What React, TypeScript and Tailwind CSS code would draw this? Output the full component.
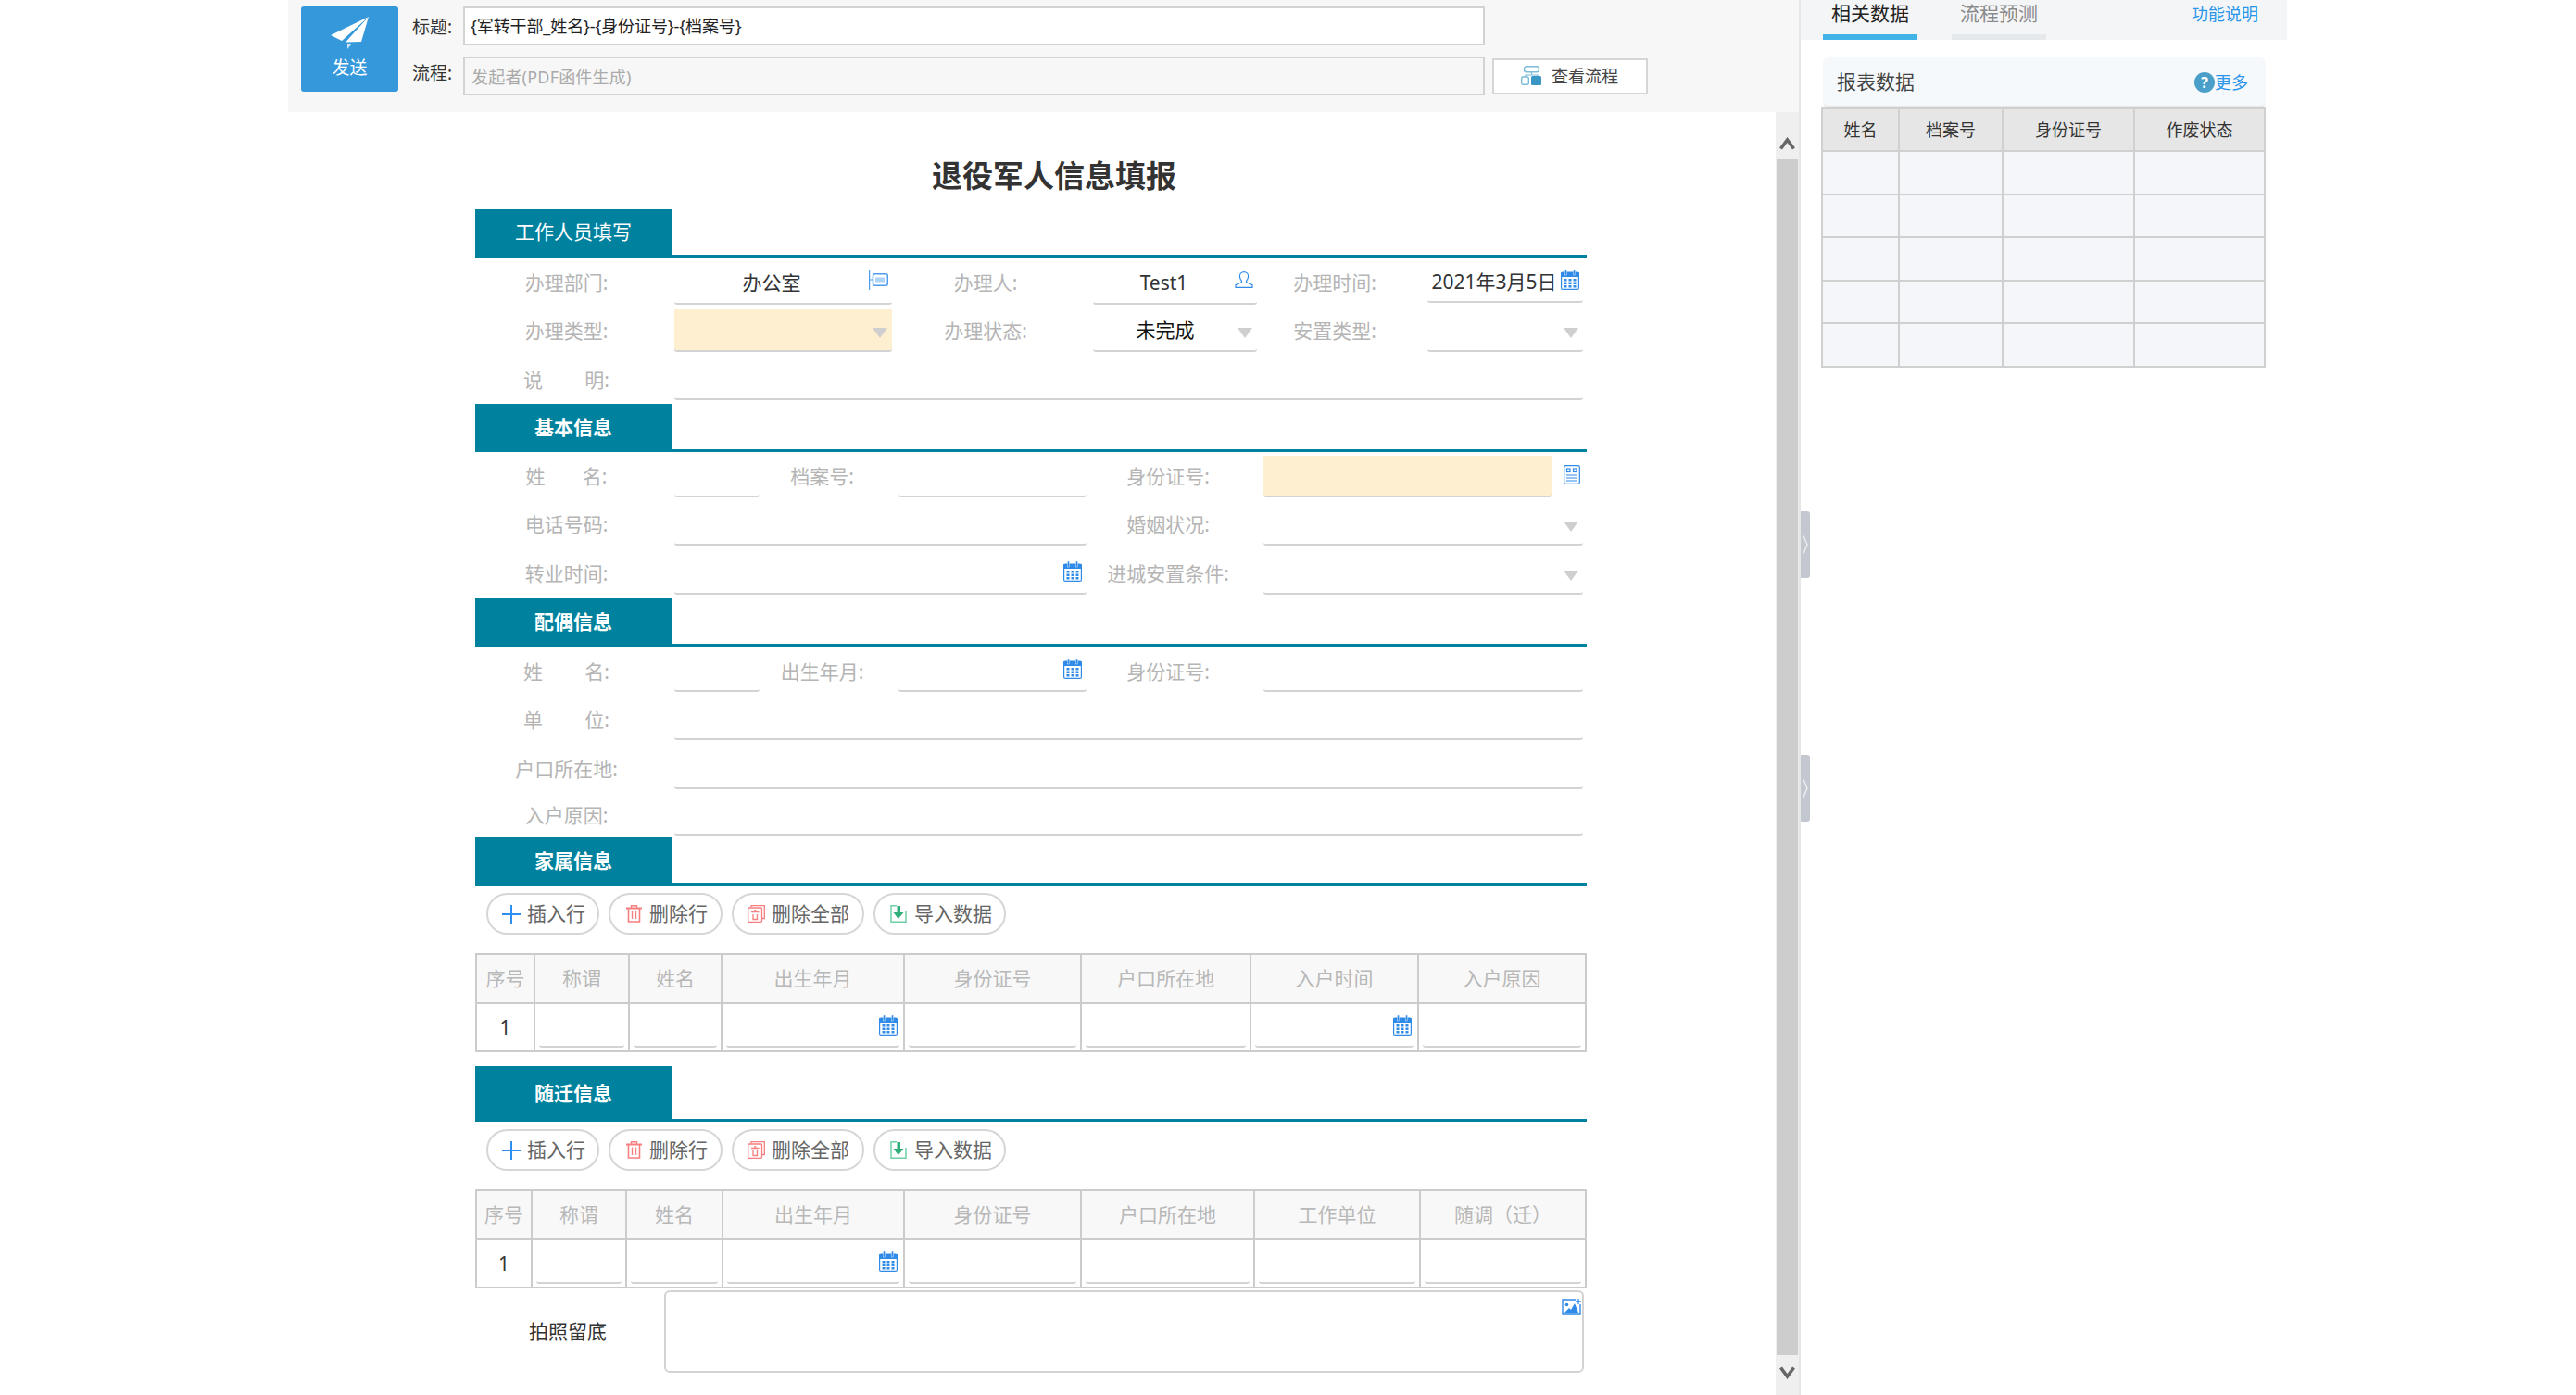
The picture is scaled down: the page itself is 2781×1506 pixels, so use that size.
import React from "react";

const BLUE = "#2f8ae8";

function Calendar() {
  return (
    <svg width="20" height="22" viewBox="0 0 20 22" className="block shrink-0">
      <rect x="0.6" y="3" width="18.8" height="18.4" rx="1.5" fill="#fff" stroke={BLUE} strokeWidth="1.2" />
      <rect x="0" y="3" width="20" height="5" rx="1" fill={BLUE} />
      <rect x="4.5" y="0" width="2" height="6" fill={BLUE} stroke="#fff" strokeWidth="0.4" />
      <rect x="13.5" y="0" width="2" height="6" fill={BLUE} stroke="#fff" strokeWidth="0.4" />
      {[3.5, 8.5, 13.5].map((x) =>
        [10, 13.5, 17].map((y) => <rect key={`${x}-${y}`} x={x} y={y} width="3" height="2.5" fill={BLUE} />)
      )}
    </svg>
  );
}

function Caret() {
  return (
    <svg width="16" height="11" viewBox="0 0 16 11" className="block shrink-0">
      <path d="M0 0H16L8 11Z" fill="#cfcfcf" />
    </svg>
  );
}

function DeptIcon() {
  return (
    <svg width="21" height="22" viewBox="0 0 21 22" className="block shrink-0" fill="none" stroke="#4a9df0">
      <path d="M0.6 0V22M0.6 11H4" strokeWidth="1.2" />
      <rect x="4.5" y="4.8" width="15.8" height="12.4" rx="2" strokeWidth="1.5" />
      <path d="M8 8.5V13.5M10 8.5V13.5M12 8.5V13.5M14 8.5V13.5M16 8.5V13.5" strokeWidth="0.9" />
    </svg>
  );
}

function PersonIcon() {
  return (
    <svg width="20" height="18" viewBox="0 0 20 18" className="block shrink-0" fill="none" stroke={BLUE} strokeWidth="1.2">
      <path d="M10 0.7a4.6 4.6 0 0 0-4.6 4.6c0 2 .9 3.6 2 4.8v1.6L1 14.6v2.7h18v-2.7l-6.4-2.9v-1.6c1.1-1.2 2-2.8 2-4.8A4.6 4.6 0 0 0 10 .7z" />
    </svg>
  );
}

function IdIcon() {
  return (
    <svg width="18" height="21" viewBox="0 0 18 21" className="block shrink-0" fill="none" stroke={BLUE} strokeWidth="1.2">
      <rect x="0.7" y="0.7" width="16.6" height="19.6" rx="1.5" />
      <rect x="3.5" y="4" width="3.5" height="3.5" />
      <rect x="10.5" y="4" width="3.5" height="3.5" />
      <path d="M3 11H15M3 14H15M3 17H15" />
    </svg>
  );
}

function ImageAddIcon() {
  return (
    <svg width="21" height="18" viewBox="0 0 21 18" className="block">
      <path d="M15 1H1V17H20V6" fill="none" stroke={BLUE} strokeWidth="1.4" />
      <circle cx="5.5" cy="6.5" r="1.8" fill={BLUE} />
      <path d="M3 15L8 10L10 12L14 5L18 15Z" fill={BLUE} />
      <path d="M18 0V6M15 3H21" stroke={BLUE} strokeWidth="1.3" />
    </svg>
  );
}

function PlusIcon() {
  return (
    <svg width="20" height="20" viewBox="0 0 20 20" className="block shrink-0">
      <path d="M10 0V20M0 10H20" stroke="#2f8ff0" strokeWidth="2" />
    </svg>
  );
}

function TrashIcon() {
  return (
    <svg width="17" height="19" viewBox="0 0 17 19" className="block shrink-0" fill="none" stroke="#f77f7f">
      <path d="M0 3.5H17" strokeWidth="2" />
      <path d="M5.5 3V0.8H11.5V3" strokeWidth="1.4" />
      <path d="M2.5 4V18H14.5V4" strokeWidth="1.6" />
      <path d="M6.5 6.5V15M10.5 6.5V15" strokeWidth="1.4" />
    </svg>
  );
}

function Trash2Icon() {
  return (
    <svg width="19" height="19" viewBox="0 0 19 19" className="block shrink-0" fill="none" stroke="#f77f7f" strokeWidth="1.3">
      <path d="M4 2.5V0.7H18.3V14.5H16" />
      <rect x="0.7" y="3" width="14.8" height="15.3" rx="1" />
      <path d="M4 7.5H12.5M6 10V15.5H10.5V10M7 5.8H9.5" />
    </svg>
  );
}

function ImportIcon() {
  return (
    <svg width="18" height="19" viewBox="0 0 18 19" className="block shrink-0" fill="none">
      <path d="M7 0.8H1V18.2H17V7" stroke="#6fcfa5" strokeWidth="1.5" />
      <path d="M11 1V8H14.5L8.8 15L3.5 8H7.5V1Z" fill="#2fae78" />
    </svg>
  );
}

function FlowIcon() {
  return (
    <svg width="23" height="21" viewBox="0 0 23 21" className="block shrink-0" fill="none">
      <rect x="3.5" y="0.7" width="16" height="6" rx="2.5" stroke="#7cbcd8" strokeWidth="1.4" />
      <path d="M11.5 7V10M5 12V10H18V12" stroke="#7cbcd8" strokeWidth="1.2" />
      <rect x="0.7" y="12" width="7.6" height="8.3" rx="1.5" stroke="#7cbcd8" strokeWidth="1.4" />
      <rect x="11" y="11" width="11" height="10" rx="1.5" fill="#3a97c5" />
    </svg>
  );
}

function PlaneIcon() {
  return (
    <svg width="41" height="35" viewBox="0 0 41 35" className="block">
      <path d="M41 0L0 20L12 26Z" fill="#fff" />
      <path d="M41 0L16 27.5L33 27Z" fill="#fff" />
      <path d="M18 29V35L23 29Z" fill="#fff" fillOpacity="0.75" />
    </svg>
  );
}

function Section({ title, bold = true, tall = false, className = "" }: { title: string; bold?: boolean; tall?: boolean; className?: string }) {
  return (
    <div className={`flex border-b-[3px] border-[#00829e] ${tall ? "h-[60px]" : "h-[52px]"} ${className}`}>
      <div className={`flex h-full w-[212px] items-center justify-center bg-[#00829e] text-[21px] leading-none text-white ${bold ? "pt-[2px] font-bold" : ""}`}>
        {title}
      </div>
    </div>
  );
}

function Label({ className, children }: { className: string; children: React.ReactNode }) {
  return <div className={`flex shrink-0 items-center justify-center text-[21px] leading-none whitespace-nowrap text-[#b5b5b5] ${className}`}>{children}</div>;
}

function Spread({ a, b, className }: { a: string; b: string; className: string }) {
  return (
    <span className={`flex justify-between ${className}`}>
      <span>{a}</span>
      <span>{b}</span>
    </span>
  );
}

function Field({ className, children }: { className: string; children?: React.ReactNode }) {
  return <div className={`flex shrink-0 items-center rounded-b-[3px] border-b-2 border-[#d3d3d3] text-[21px] leading-none text-[#333] ${className}`}>{children}</div>;
}

const L1 = "w-[215px] pr-[18px]";
const H1 = "h-[46px]";
const H2 = "h-[45px]";

function ActionButtons({ className }: { className: string }) {
  const cls = "flex h-[45px] items-center rounded-full border-2 border-[#d6d6d6] bg-white text-[21px] leading-none whitespace-nowrap text-[#666]";
  return (
    <div className={`flex gap-[10px] pl-[12px] ${className}`}>
      <div className={`${cls} w-[122px] gap-[7px] pl-[15px]`}><PlusIcon />插入行</div>
      <div className={`${cls} w-[123px] gap-[8px] pl-[17px]`}><TrashIcon />删除行</div>
      <div className={`${cls} w-[143px] gap-[7px] pl-[15px]`}><Trash2Icon />删除全部</div>
      <div className={`${cls} w-[143px] gap-[8px] pl-[16px]`}><ImportIcon />导入数据</div>
    </div>
  );
}

function CellInput({ calendar = false }: { calendar?: boolean }) {
  return (
    <div className="mx-[4px] mb-[3px] flex h-[47px] items-center justify-end rounded-b-[3px] border-b-2 border-[#d3d3d3] pr-[2px]">
      {calendar && <Calendar />}
    </div>
  );
}

function DataTable({ cols, heads, cal }: { cols: string[]; heads: string[]; cal: number[] }) {
  const border = "border-2 border-[#cccccc]";
  return (
    <table className="w-[1198px] table-fixed border-collapse">
      <colgroup>
        {cols.map((c, i) => (
          <col key={i} className={c} />
        ))}
      </colgroup>
      <tbody>
        <tr className="h-[53px]">
          {heads.map((h, i) => (
            <td key={i} className={`${border} bg-[#f8f8f8] p-0 text-center text-[21px] leading-none whitespace-nowrap text-[#b8b8b8]`}>
              {h}
            </td>
          ))}
        </tr>
        <tr className="h-[52px]">
          <td className={`${border} p-0 text-center text-[21px] leading-none text-[#333]`}>1</td>
          {heads.slice(1).map((_, i) => (
            <td key={i} className={`${border} p-0 align-bottom`}>
              <CellInput calendar={cal.includes(i + 1)} />
            </td>
          ))}
        </tr>
      </tbody>
    </table>
  );
}

function Scrollbar() {
  return (
    <div className="flex w-[25px] shrink-0 flex-col bg-[#efefef]">
      <div className="flex h-[51px] justify-center pt-[27px]">
        <svg width="17" height="14" viewBox="0 0 17 14" className="block">
          <path d="M1.5 12.5L8.5 3L15.5 12.5" fill="none" stroke="#666" strokeWidth="3.6" />
        </svg>
      </div>
      <div className="mx-px flex-1 bg-[#cdcdcd]" />
      <div className="flex h-[43px] justify-center pt-[12px]">
        <svg width="17" height="14" viewBox="0 0 17 14" className="block">
          <path d="M1.5 1.5L8.5 11L15.5 1.5" fill="none" stroke="#666" strokeWidth="3.6" />
        </svg>
      </div>
    </div>
  );
}

function Handle({ className }: { className: string }) {
  return (
    <div className={`absolute left-0 flex h-[72px] w-[10px] items-center justify-center rounded-r-[3px] bg-[#c3c8d0] ${className}`}>
      <svg width="6" height="20" viewBox="0 0 6 20" className="block">
        <path d="M1 0.5L5 10L1 19.5" fill="none" stroke="#eceef1" strokeWidth="1.4" />
      </svg>
    </div>
  );
}

function TopBar() {
  return (
    <div className="flex h-[121px] shrink-0 bg-[#f7f7f7] pt-[7px] pl-[14px]">
      <div className="flex h-[92px] w-[105px] shrink-0 flex-col items-center rounded-[3px] bg-[#3498db] pt-[11px] text-white">
        <PlaneIcon />
        <span className="mt-[11px] text-[19px] leading-none">发送</span>
      </div>
      <div className="ml-[15px] flex flex-col gap-[12px]">
        <div className="flex h-[42px]">
          <div className="flex w-[55px] items-center pt-[3px] text-[19px] leading-none text-[#333]">标题:</div>
          <div className="flex w-[1103px] items-center border-2 border-[#d3d3d3] bg-white pl-[6px] text-[18px] leading-none tracking-[-0.1px] text-[#222]">
            {"{军转干部_姓名}-{身份证号}-{档案号}"}
          </div>
        </div>
        <div className="flex h-[42px]">
          <div className="flex w-[55px] items-center pb-[5px] text-[19px] leading-none text-[#333]">流程:</div>
          <div className="flex w-[1103px] items-center border-2 border-[#d3d3d3] bg-[#f7f7f7] pt-[2px] pl-[7px] text-[18px] leading-none tracking-[0.2px] text-[#aaa]">
            发起者(PDF函件生成)
          </div>
          <div className="mt-[2px] ml-[8px] flex h-[39px] w-[168px] items-center gap-[10px] border-2 border-[#d6d6d6] bg-white pb-[2px] pl-[29px] text-[18px] leading-none text-[#444]">
            <FlowIcon />
            查看流程
          </div>
        </div>
      </div>
    </div>
  );
}

function Form() {
  return (
    <div className="min-w-0 flex-1 pl-[202px]">
      <div className="w-[1200px]">
        <h1 className="h-[105px] pt-[50px] pl-[50px] text-center text-[33px] leading-[38px] font-bold text-[#333]">退役军人信息填报</h1>

        <Section title="工作人员填写" bold={false} />
        <div className="flex h-[51px] items-end">
          <Label className={`${L1} ${H1} pb-[2px]`}>办理部门:</Label>
          <Field className={`w-[235px] pr-[4px] ${H1}`}>
            <span className="flex-1 text-center">办公室</span>
            <span className="mb-[6px]"><DeptIcon /></span>
          </Field>
          <Label className={`w-[217px] pr-[15px] ${H1} pb-[2px]`}>办理人:</Label>
          <Field className={`w-[177px] pr-[4px] ${H1}`}>
            <span className="flex-1 text-center">Test1</span>
            <span className="mb-[6px]"><PersonIcon /></span>
          </Field>
          <Label className={`w-[184px] pr-[16px] ${H1} pb-[2px]`}>办理时间:</Label>
          <Field className={`mb-[2px] w-[168px] pr-[4px] ${H1}`}>
            <span className="flex-1 pt-[3px] text-center whitespace-nowrap">2021年3月5日</span>
            <span className="mb-[2px]"><Calendar /></span>
          </Field>
        </div>
        <div className="flex h-[51px] items-end">
          <Label className={`${L1} ${H1}`}>办理类型:</Label>
          <Field className={`w-[235px] justify-end bg-[#feefd0] pr-[5px] ${H1}`}>
            <span className="mt-[6px]"><Caret /></span>
          </Field>
          <Label className={`w-[217px] pr-[15px] ${H1}`}>办理状态:</Label>
          <Field className={`w-[177px] pr-[5px] ${H1}`}>
            <span className="flex-1 text-center text-[#111]">未完成</span>
            <span className="mt-[6px]"><Caret /></span>
          </Field>
          <Label className={`w-[184px] pr-[16px] ${H1}`}>安置类型:</Label>
          <Field className={`w-[168px] justify-end pr-[5px] ${H1}`}>
            <span className="mt-[6px]"><Caret /></span>
          </Field>
        </div>
        <div className="flex h-[52px] items-end">
          <Label className={`${L1} h-[44px]`}><Spread a="说" b="明:" className="w-[93px]" /></Label>
          <Field className="h-[44px] w-[981px]" />
        </div>

        <Section title="基本信息" className="mt-[4px]" />
        <div className="flex h-[49px] items-end">
          <Label className={`${L1} ${H2}`}><Spread a="姓" b="名:" className="w-[88px]" /></Label>
          <Field className={`w-[92px] ${H2}`} />
          <Label className={`w-[150px] pr-[15px] ${H2}`}>档案号:</Label>
          <Field className={`w-[203px] ${H2}`} />
          <Label className={`w-[191px] pr-[15px] ${H2}`}>身份证号:</Label>
          <Field className={`w-[311px] bg-[#feefd0] ${H2}`} />
          <div className={`flex w-[31px] shrink-0 items-center justify-end pb-[4px] ${H2}`}><IdIcon /></div>
        </div>
        <div className="flex h-[52px] items-end">
          <Label className={`${L1} ${H2}`}>电话号码:</Label>
          <Field className={`w-[445px] ${H2}`} />
          <Label className={`w-[191px] pr-[15px] ${H2}`}>婚姻状况:</Label>
          <Field className={`w-[345px] justify-end pr-[5px] ${H2}`}>
            <span className="mt-[6px]"><Caret /></span>
          </Field>
        </div>
        <div className="flex h-[53px] items-end">
          <Label className={`${L1} ${H2}`}>转业时间:</Label>
          <Field className={`w-[445px] justify-end pr-[5px] ${H2}`}>
            <span className="mb-[4px]"><Calendar /></span>
          </Field>
          <Label className={`w-[191px] pr-[15px] ${H2}`}>进城安置条件:</Label>
          <Field className={`w-[345px] justify-end pr-[5px] ${H2}`}>
            <span className="mt-[6px]"><Caret /></span>
          </Field>
        </div>

        <Section title="配偶信息" className="mt-[4px]" />
        <div className="flex h-[49px] items-end">
          <Label className={`${L1} h-[44px]`}><Spread a="姓" b="名:" className="w-[93px]" /></Label>
          <Field className="h-[44px] w-[92px]" />
          <Label className="h-[44px] w-[150px] pr-[15px]">出生年月:</Label>
          <Field className="h-[44px] w-[203px] justify-end pr-[5px]">
            <span className="mb-[4px]"><Calendar /></span>
          </Field>
          <Label className="h-[44px] w-[191px] pr-[15px]">身份证号:</Label>
          <Field className="h-[44px] w-[345px]" />
        </div>
        <div className="flex h-[52px] items-end">
          <Label className={`${L1} h-[44px]`}><Spread a="单" b="位:" className="w-[93px]" /></Label>
          <Field className="h-[44px] w-[981px]" />
        </div>
        <div className="flex h-[53px] items-end">
          <Label className={`${L1} h-[44px]`}>户口所在地:</Label>
          <Field className="h-[44px] w-[981px]" />
        </div>
        <div className="flex h-[50px] items-end">
          <Label className={`${L1} h-[44px]`}>入户原因:</Label>
          <Field className="h-[44px] w-[981px]" />
        </div>

        <Section title="家属信息" className="mt-[2px]" />
        <ActionButtons className="mt-[8px] mb-[20px]" />
        <DataTable
          cols={["w-[63px]", "w-[102px]", "w-[100px]", "w-[197px]", "w-[191px]", "w-[183px]", "w-[181px]", "w-[181px]"]}
          heads={["序号", "称谓", "姓名", "出生年月", "身份证号", "户口所在地", "入户时间", "入户原因"]}
          cal={[3, 6]}
        />

        <Section title="随迁信息" tall className="mt-[15px]" />
        <ActionButtons className="mt-[8px] mb-[20px]" />
        <DataTable
          cols={["w-[60px]", "w-[102px]", "w-[104px]", "w-[196px]", "w-[191px]", "w-[187px]", "w-[179px]", "w-[179px]"]}
          heads={["序号", "称谓", "姓名", "出生年月", "身份证号", "户口所在地", "工作单位", "随调（迁）"]}
          cal={[3]}
        />

        <div className="mt-[2px] flex">
          <div className="flex w-[204px] shrink-0 items-center pl-[58px] text-[21px] leading-none text-[#333]">拍照留底</div>
          <div className="flex h-[89px] w-[993px] shrink-0 justify-end rounded-[6px] border-2 border-[#d3d3d3] pt-[7px] pr-[1px]">
            <ImageAddIcon />
          </div>
        </div>
      </div>
    </div>
  );
}

function RightPanel() {
  const rows = ["h-[47px]", "h-[46px]", "h-[47px]", "h-[46px]", "h-[47px]"];
  return (
    <div className="relative h-full w-[527px] shrink-0 border-l-2 border-[#e6e6e6] bg-white">
      <Handle className="top-[552px]" />
      <Handle className="top-[815px]" />
      <div className="flex h-[43px] bg-[#f4f5f7] pl-[24px]">
        <div className="h-full w-[102px] border-b-[6px] border-[#41b3e7] text-center text-[21px] leading-[28px] text-[#222]">相关数据</div>
        <div className="ml-[37px] h-full w-[102px] border-b-[6px] border-[#e6e9ec] text-center text-[21px] leading-[28px] text-[#8a8a8a]">流程预测</div>
        <div className="mr-[31px] ml-auto pt-[5px] text-[18px] leading-[20px] text-[#2b95ea]">功能说明</div>
      </div>
      <div className="mt-[19px] ml-[24px] flex h-[54px] w-[478px] items-center justify-between rounded-[6px] border-b-2 border-[#e8e8e8] bg-[#f6f9fc] pt-[1px] pr-[19px] pl-[15px]">
        <span className="text-[21px] leading-none text-[#444]">报表数据</span>
        <span className="flex items-center text-[18px] leading-none text-[#2b95ea]">
          <span className="flex h-[22px] w-[22px] items-center justify-center rounded-full bg-[#4a9fc9] text-[16px] font-bold text-white">?</span>
          更多
        </span>
      </div>
      <table className="ml-[22px] w-[478px] table-fixed border-collapse">
        <colgroup>
          <col className="w-[83px]" />
          <col className="w-[112px]" />
          <col className="w-[142px]" />
          <col className="w-[141px]" />
        </colgroup>
        <tbody>
          <tr className="h-[46px]">
            {["姓名", "档案号", "身份证号", "作废状态"].map((h) => (
              <td key={h} className="border-2 border-[#d0d0d0] bg-[#e6e6e6] p-0 text-center text-[18px] leading-none text-[#333]">
                {h}
              </td>
            ))}
          </tr>
          {rows.map((r, i) => (
            <tr key={i} className={r}>
              {[0, 1, 2, 3].map((c) => (
                <td key={c} className="border-2 border-[#d0d0d0] bg-[#f4f6fa] p-0" />
              ))}
            </tr>
          ))}
        </tbody>
      </table>
    </div>
  );
}

export default function App() {
  return (
    <div className="flex h-[1506px] w-[2781px] overflow-hidden bg-white pl-[311px] font-['Noto_Sans','Noto_Sans_CJK_SC',sans-serif]">
      <div className="flex h-full w-[1631px] shrink-0 flex-col">
        <TopBar />
        <div className="flex min-h-0 flex-1">
          <Form />
          <Scrollbar />
        </div>
      </div>
      <RightPanel />
    </div>
  );
}
